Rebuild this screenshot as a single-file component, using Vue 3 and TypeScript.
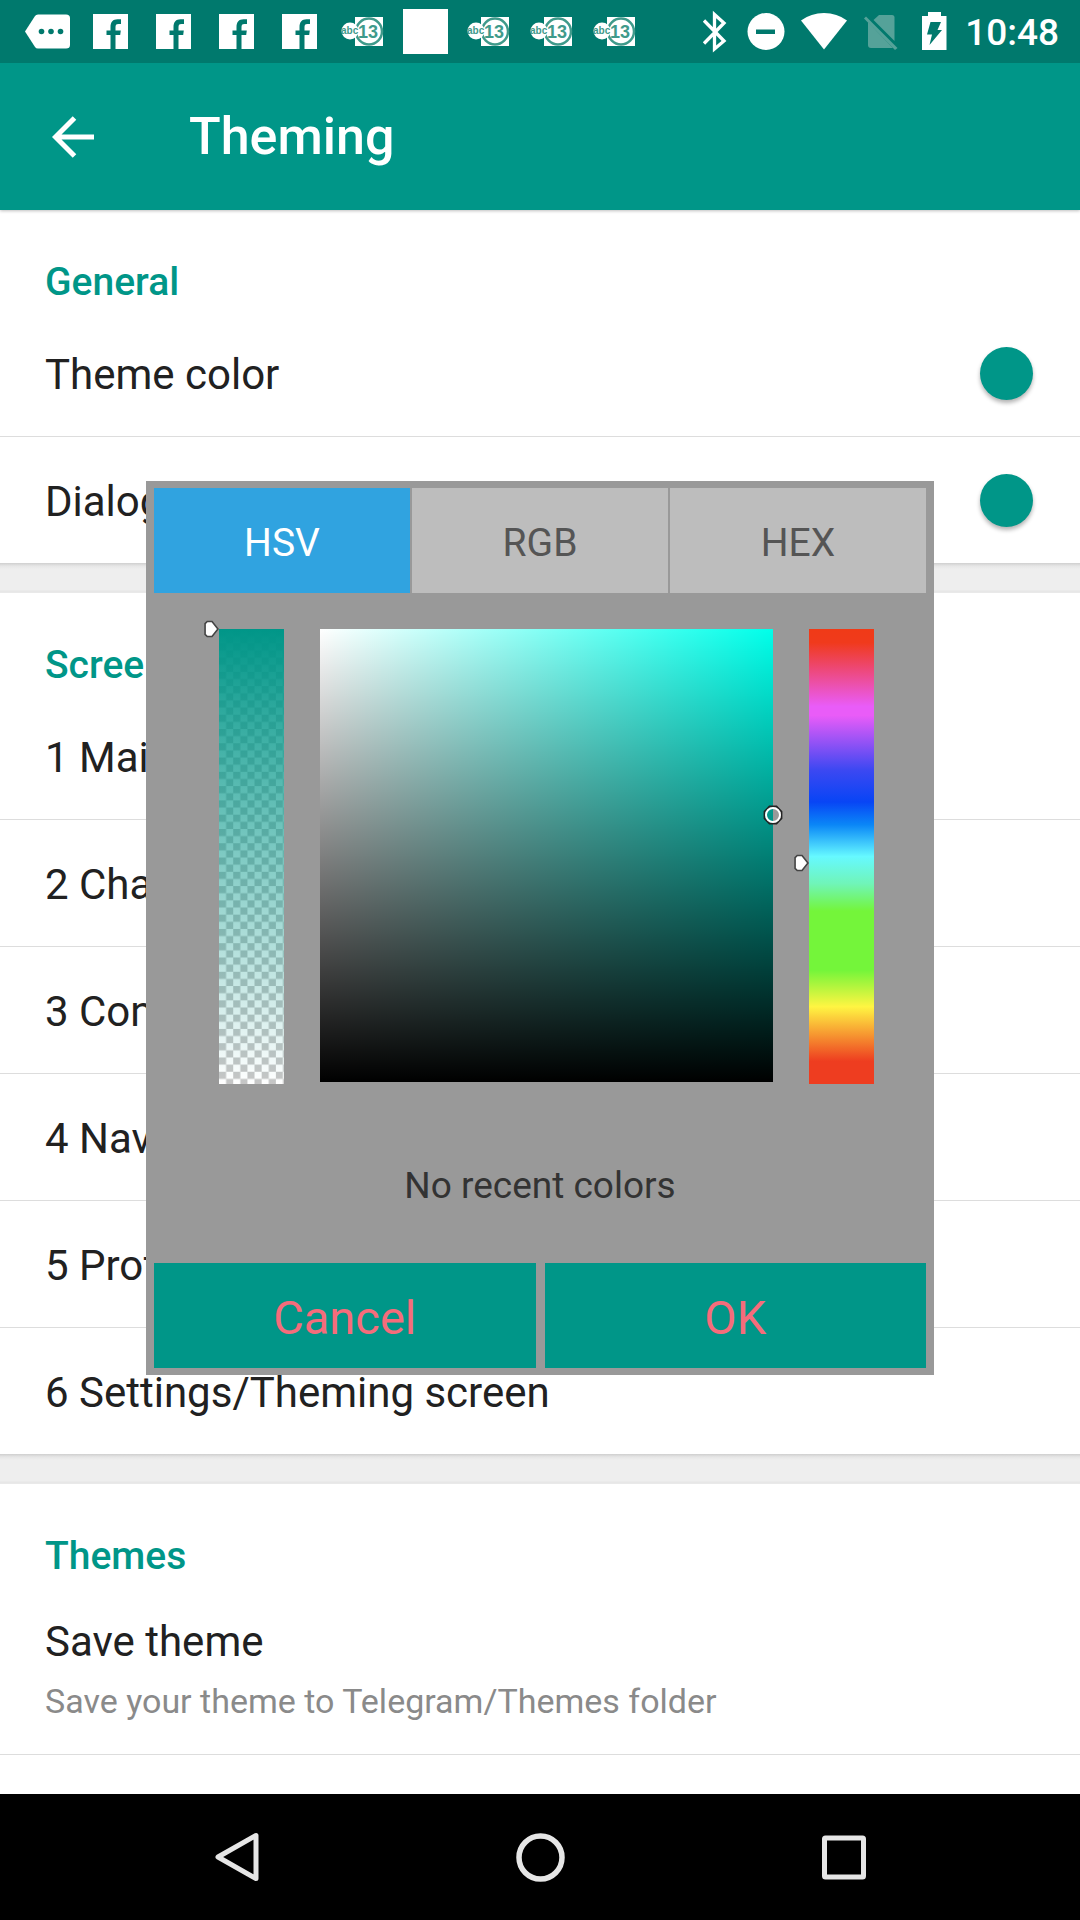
<script setup lang="ts">
import { computed, ref } from 'vue'

type Notice = 'tag' | 'facebook' | 'abc13' | 'blank'
interface Row {
  label: string
  detail?: string
  swatch?: boolean
}
interface Section {
  title: string
  rows: Row[]
}

const notices: Notice[] = [
  'tag', 'facebook', 'facebook', 'facebook', 'facebook',
  'abc13', 'blank', 'abc13', 'abc13', 'abc13',
]

const sections: Section[] = [
  {
    title: 'General',
    rows: [
      { label: 'Theme color', swatch: true },
      { label: 'Dialog color', swatch: true },
    ],
  },
  {
    title: 'Screens',
    rows: [
      { label: '1 Main screen' },
      { label: '2 Chat screen' },
      { label: '3 Contacts screen' },
      { label: '4 Navigation drawer' },
      { label: '5 Profile screen' },
      { label: '6 Settings/Theming screen' },
    ],
  },
  {
    title: 'Themes',
    rows: [{ label: 'Save theme', detail: 'Save your theme to Telegram/Themes folder' }],
  },
]

const tabs = ['HSV', 'RGB', 'HEX']
const activeTab = ref('HSV')

const alpha = ref(100)
const hue = ref(175)
const saturation = ref(100)
const brightness = ref(59)

const pureHue = computed(() => `hsl(${hue.value} 100% 50%)`)
const alphaTop = computed(() => `${100 - alpha.value}%`)
const hueTop = computed(() => `${100 - hue.value / 3.6}%`)
</script>

<template>
  <div class="screen">
    <header class="top">
      <div class="status">
        <div class="notices">
          <svg v-for="(n, i) in notices" :key="i" class="notice" viewBox="0 0 63 63" aria-hidden="true">
            <template v-if="n === 'tag'">
              <path d="M8 31.500 L18 16 Q19 14.500 21 14.500 H49 Q53 14.500 53 18 V45 Q53 48.500 49 48.500 H21 Q19 48.500 18 47 Z" fill="#fff" />
              <circle cx="24.500" cy="31.500" r="2.800" fill="#00796d" />
              <circle cx="34" cy="31.500" r="2.800" fill="#00796d" />
              <circle cx="43.500" cy="31.500" r="2.800" fill="#00796d" />
            </template>
            <template v-else-if="n === 'facebook'">
              <rect x="13" y="14" width="35" height="35" fill="#fff" />
              <path d="M30.500 49 V35 H26.500 V30.500 H30.500 V27 C30.500 22 33 19.300 37.500 19.300 H41 V24 H38.500 C36 24 35.500 25 35.500 27.500 V30.500 H40.800 L40.200 35 H35.500 V49 Z" fill="#00796d" />
            </template>
            <template v-else-if="n === 'abc13'">
              <rect x="23" y="17" width="28" height="29" fill="#fff" />
              <circle cx="37" cy="31.500" r="13" fill="#fff" stroke="#3f9a8b" stroke-width="2.500" />
              <circle cx="18" cy="31" r="8.500" fill="#fff" />
              <text x="9" y="34" class="abc">abc</text>
              <text x="26" y="38" class="thirteen">13</text>
            </template>
            <rect v-else x="8" y="9" width="45" height="45" fill="#fff" />
          </svg>
        </div>
        <div class="system">
          <svg class="sys" viewBox="-2 0 50 63" aria-hidden="true">
            <path d="M17 20.500 L37 41 L27.500 49 V14.500 L37 23 L17 43.500" fill="none" stroke="#fff" stroke-width="3.300" />
          </svg>
          <svg class="sys" viewBox="-2 0 50 63" aria-hidden="true">
            <circle cx="23" cy="31.500" r="18.500" fill="#fff" />
            <rect x="13" y="29.500" width="19" height="4.500" fill="#00796d" />
          </svg>
          <svg class="sys" viewBox="-2 0 50 63" aria-hidden="true">
            <path d="M25 49.500 L2 20.500 Q12 13 25 13 Q38 13 48 20.500 Z" fill="#fff" />
          </svg>
          <svg class="sys" viewBox="-2 0 50 63" aria-hidden="true">
            <g fill="#55a299">
              <path d="M18.500 20 L24 15 H37 Q39.500 15 39.500 17.500 V41 Z" />
              <path d="M13 22 L38 48 H16 Q13 48 13 45 Z" />
              <path d="M11 16.500 L9 18.500 L40 50 L42.500 48 Z" />
            </g>
          </svg>
          <svg class="sys" viewBox="-2 0 50 63" aria-hidden="true">
            <path d="M11 16 H17 V12 H30 V16 H35.500 V50 H11 Z" fill="#fff" />
            <path d="M19.500 22 H30 L26.500 30 H31 L18.500 45 L21 34.500 H16 Z" fill="#00796d" />
          </svg>
          <span class="clock">10:48</span>
        </div>
      </div>
      <div class="appbar">
        <button class="back" type="button" aria-label="Back">
          <svg viewBox="0 0 42 42" aria-hidden="true">
            <path d="M22.500 2 L3.500 21 L22.500 40 M3.500 21 H42" fill="none" stroke="#fff" stroke-width="5" />
          </svg>
        </button>
        <h1>Theming</h1>
      </div>
    </header>

    <main class="list">
      <section v-for="s in sections" :key="s.title" class="section">
        <h2>{{ s.title }}</h2>
        <button v-for="r in s.rows" :key="r.label" type="button" class="row" :class="{ tall: r.detail }">
          <span class="texts">
            <span class="label">{{ r.label }}</span>
            <span v-if="r.detail" class="detail">{{ r.detail }}</span>
          </span>
          <span v-if="r.swatch" class="swatch"></span>
        </button>
      </section>
    </main>

    <nav class="navbar">
      <button type="button" aria-label="Back">
        <svg viewBox="0 0 50 50" aria-hidden="true">
          <path d="M45 3.500 V46.500 L7 25 Z" fill="none" stroke="#e6e6e6" stroke-width="5" stroke-linejoin="round" />
        </svg>
      </button>
      <button type="button" aria-label="Home">
        <svg viewBox="0 0 50 50" aria-hidden="true">
          <circle cx="25.500" cy="25.500" r="21.500" fill="none" stroke="#e6e6e6" stroke-width="5.500" />
        </svg>
      </button>
      <button type="button" aria-label="Recent apps">
        <svg viewBox="0 0 50 50" aria-hidden="true">
          <rect x="5.500" y="6" width="39" height="39" rx="1" fill="none" stroke="#e6e6e6" stroke-width="5" stroke-linejoin="round" />
        </svg>
      </button>
    </nav>

    <div class="overlay">
      <div class="dialog" role="dialog" aria-label="Color picker">
        <div class="tabs" role="tablist">
          <button
            v-for="t in tabs" :key="t" type="button" role="tab"
            :aria-selected="t === activeTab" :class="{ active: t === activeTab }" @click="activeTab = t"
          >{{ t }}</button>
        </div>

        <div class="picker">
          <div class="bar">
            <svg class="checker" viewBox="0 0 64 446" preserveAspectRatio="none" aria-hidden="true">
              <defs>
                <pattern id="checks" width="14" height="14" patternUnits="userSpaceOnUse">
                  <rect width="14" height="14" fill="#fff" />
                  <path d="M0 0H7V14H14V7H0Z" fill="#c6c6c6" />
                </pattern>
                <linearGradient id="fade" x1="0" y1="0" x2="0" y2="1">
                  <stop offset="0" stop-color="#009688" />
                  <stop offset="1" stop-color="#009688" stop-opacity="0" />
                </linearGradient>
              </defs>
              <rect width="64" height="446" fill="url(#checks)" />
              <rect width="64" height="446" fill="url(#fade)" />
            </svg>
            <svg class="pointer" :style="{ top: alphaTop }" viewBox="0 0 14 16" aria-hidden="true">
              <path d="M3 1 H7.500 L13 8 L7.500 15 H3 L1 13 V3 Z" fill="#fff" stroke="#444" stroke-width="1.500" />
            </svg>
            <input v-model.number="alpha" type="range" min="0" max="100" aria-label="Opacity">
          </div>
          <div class="field" :style="{ backgroundColor: pureHue }">
            <svg class="ring" :style="{ left: saturation + '%', top: (100 - brightness) + '%' }" viewBox="0 0 20 20" aria-hidden="true">
              <path d="M6.500 1.500 H13.500 L18.500 6.500 V13.500 L13.500 18.500 H6.500 L1.500 13.500 V6.500 Z" fill="none" stroke="#222" stroke-width="1.800" />
              <circle cx="10" cy="10" r="7" fill="none" stroke="#fff" stroke-width="2" />
            </svg>
          </div>
          <div class="bar hue">
            <svg class="pointer" :style="{ top: hueTop }" viewBox="0 0 14 16" aria-hidden="true">
              <path d="M3 1 H7.500 L13 8 L7.500 15 H3 L1 13 V3 Z" fill="#fff" stroke="#444" stroke-width="1.500" />
            </svg>
            <input v-model.number="hue" type="range" min="0" max="360" aria-label="Hue">
          </div>
        </div>

        <p class="recent">No recent colors</p>

        <div class="actions">
          <button type="button">Cancel</button>
          <button type="button">OK</button>
        </div>
      </div>
    </div>
  </div>
</template>

<style>
body {
  margin: 0;
  background: #fff;
}
</style>

<style scoped>
.screen {
  position: relative;
  display: flex;
  flex-direction: column;
  height: 100vh;
  overflow: hidden;
  font-family: Roboto, "Noto Sans", sans-serif;
  color: #212121;
}
button {
  margin: 0;
  padding: 0;
  border: 0;
  background: none;
  font: inherit;
  color: inherit;
}
svg {
  display: block;
}
.top {
  position: relative;
  background: #009688;
  box-shadow: 0 1px 3px rgba(0, 0, 0, 0.25);
}
.status {
  display: flex;
  justify-content: space-between;
  height: 63px;
  padding: 0 21px 0 17px;
  background: #00796d;
}
.notices,
.system {
  display: flex;
  align-items: center;
}
.notice {
  width: 63px;
  height: 63px;
}
.abc {
  font: bold 10px "Liberation Sans", sans-serif;
  fill: #3f9a8b;
}
.thirteen {
  font: bold 18px "Liberation Sans", sans-serif;
  fill: #3f9a8b;
}
.system {
  gap: 6px;
}
.sys {
  width: 50px;
  height: 63px;
}
.clock {
  font-size: 37px;
  line-height: 44px;
  font-weight: 500;
  padding-top: 2px;
  color: #fff;
}
.appbar {
  display: flex;
  align-items: center;
  gap: 95px;
  height: 147px;
  padding: 0 52px;
  color: #fff;
}
.back svg {
  width: 42px;
  height: 42px;
}
h1 {
  margin: 0;
  font-size: 52px;
  line-height: 64px;
  font-weight: 500;
}
.list {
  flex: 1;
  min-height: 0;
  overflow: hidden;
  background: #fff;
}
.section + .section {
  border-top: 30px solid #eee;
  border-image: linear-gradient(#cfcfcf, #e6e6e6 3px, #eee 6px, #eee 27px, #e6e6e6 28px, #eaeaea 30px) 30 0 0 0;
}
h2 {
  box-sizing: border-box;
  height: 100px;
  margin: 0;
  padding: 49px 45px 0;
  font-size: 39px;
  line-height: 46px;
  font-weight: 500;
  color: #009688;
}
.row {
  display: flex;
  align-items: center;
  justify-content: space-between;
  box-sizing: border-box;
  width: 100%;
  height: 127px;
  padding: 0 47px 0 45px;
  border-bottom: 1px solid #ddd;
  text-align: left;
}
.row:last-child:not(.tall) {
  height: 126px;
  border-bottom: 0;
}
.row.tall {
  align-items: flex-start;
  height: 171px;
  padding-top: 29px;
}
.texts {
  display: flex;
  flex-direction: column;
  gap: 14px;
  padding-top: 4px;
}
.label {
  font-size: 42px;
  line-height: 50px;
}
.detail {
  font-size: 34px;
  line-height: 40px;
  color: #8a8a8a;
}
.swatch {
  width: 53px;
  height: 53px;
  border-radius: 50%;
  background: #009688;
  box-shadow: 0 3px 4px rgba(0, 0, 0, 0.3);
}
.navbar {
  display: flex;
  justify-content: center;
  align-items: center;
  gap: 254px;
  height: 126px;
  background: #000;
}
.navbar svg {
  width: 50px;
  height: 50px;
}
.overlay {
  position: absolute;
  inset: 62px 0 126px;
  display: flex;
  align-items: center;
  justify-content: center;
}
.dialog {
  box-sizing: border-box;
  width: 100%;
  max-width: 788px;
  padding: 7px 8px;
  background: #999;
}
.tabs {
  display: flex;
  gap: 2px;
}
.tabs button {
  flex: 1;
  height: 105px;
  padding-top: 5px;
  background: #bdbdbd;
  font-size: 39px;
  line-height: 46px;
  color: #555;
}
.tabs button.active {
  background: #30a3e0;
  color: #fff;
}
.picker {
  display: flex;
  gap: 36px;
  padding: 36px 52px 0 65px;
}
.bar {
  position: relative;
  width: 65px;
  height: 455px;
}
.checker {
  width: 100%;
  height: 100%;
}
.hue {
  background: linear-gradient(
    #f03a17 0%, #f03a1c 3%, #e95cf8 17%, #e95cf8 19%, #3c48f2 31%, #0845f5 38%, #0a86f7 43%,
    #66f9ff 50%, #70f5b8 56%, #74f53a 62%, #74f53a 75%, #fff542 83%, #ee3d20 95%, #ee3d20 100%
  );
}
.pointer {
  position: absolute;
  right: 100%;
  width: 15px;
  height: 18px;
  margin-top: -9px;
}
.bar input {
  position: absolute;
  inset: 0;
  width: 100%;
  height: 100%;
  margin: 0;
  opacity: 0;
  writing-mode: vertical-lr;
  direction: rtl;
}
.field {
  position: relative;
  flex: 1;
  height: 453px;
  background-image: linear-gradient(to top, #000, transparent), linear-gradient(to right, #fff, transparent);
}
.ring {
  position: absolute;
  width: 20px;
  height: 20px;
  margin: -10px 0 0 -10px;
}
.recent {
  margin: 0;
  padding: 80px 0 55px;
  font-size: 37px;
  line-height: 44px;
  text-align: center;
  color: #333;
}
.actions {
  display: flex;
  gap: 9px;
}
.actions button {
  flex: 1;
  height: 105px;
  padding-top: 5px;
  background: #009688;
  font-size: 47px;
  line-height: 56px;
  color: #f56c7b;
}
</style>
